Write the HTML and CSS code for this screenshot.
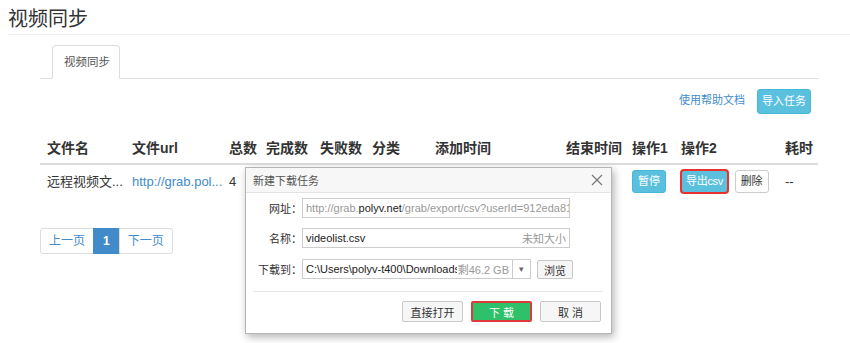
FILE: index.html
```html
<!DOCTYPE html>
<html lang="zh-CN">

<head>
  <meta charset="UTF-8">
  <title>视频同步</title>
  <link rel="stylesheet" href="styles.css">
</head>

<body>
  <h3 class="page-title">视频同步</h3>

  <div class="content">
    <ul class="tabs">
      <li class="tab active">视频同步</li>
    </ul>

    <div class="toolbar">
      <a class="help-link">使用帮助文档</a>
      <button class="btn btn-info">导入任务</button>
    </div>

    <table class="task-table">
      <colgroup>
        <col style="width: 85px">
        <col style="width: 97px">
        <col style="width: 37px">
        <col style="width: 54px">
        <col style="width: 52px">
        <col style="width: 63px">
        <col style="width: 131px">
        <col style="width: 66px">
        <col style="width: 49px">
        <col style="width: 104px">
        <col style="width: 40px">
      </colgroup>
      <thead>
        <tr>
          <th>文件名</th>
          <th>文件url</th>
          <th>总数</th>
          <th>完成数</th>
          <th>失败数</th>
          <th>分类</th>
          <th>添加时间</th>
          <th>结束时间</th>
          <th>操作1</th>
          <th>操作2</th>
          <th>耗时</th>
        </tr>
      </thead>
      <tbody>
        <tr>
          <td>远程视频文...</td>
          <td><a class="url">http://grab.pol...</a></td>
          <td>4</td>
          <td></td>
          <td></td>
          <td></td>
          <td></td>
          <td></td>
          <td><button class="btn btn-info btn-sm">暂停</button></td>
          <td>
            <button class="btn btn-info btn-sm marked">导出csv</button>
            <button class="btn btn-default btn-sm">删除</button>
          </td>
          <td>--</td>
        </tr>
      </tbody>
    </table>

    <ul class="pager">
      <li>上一页</li>
      <li class="active">1</li>
      <li>下一页</li>
    </ul>
  </div>

  <!-- 浏览器的下载对话框 -->
  <div class="download-dialog">
    <div class="dialog-head">
      <span>新建下载任务</span>
      <svg class="close" width="12" height="12" viewBox="0 0 12 12">
        <path d="M1 1L11 11M11 1L1 11" stroke="#777" stroke-width="1.2" fill="none"/>
      </svg>
    </div>
    <div class="dialog-body">
      <div class="field">
        <label>网址：</label>
        <div class="input"><span class="dim">http://grab.</span>polyv.net<span class="dim">/grab/export/csv?userId=912eda818a</span></div>
      </div>
      <div class="field">
        <label>名称：</label>
        <div class="input"><span class="grow">videolist.csv</span><span class="dim">未知大小</span></div>
      </div>
      <div class="field">
        <label>下载到：</label>
        <div class="input path-input">
          <span class="grow path">C:\Users\polyv-t400\Downloads\12</span>
          <span class="dim free">剩46.2 GB</span>
          <span class="drop">▾</span>
        </div>
        <button class="dlg-btn browse">浏览</button>
      </div>
    </div>
    <div class="dialog-foot">
      <button class="dlg-btn">直接打开</button>
      <button class="dlg-btn primary">下 载</button>
      <button class="dlg-btn">取 消</button>
    </div>
  </div>
</body>

</html>
```

FILE: styles.css
```css
body {
  margin: 0;
  padding: 8px 0 0;
  font-family: "Liberation Sans", "Noto Sans CJK SC", sans-serif;
  font-size: 13px;
  color: #333;
  background: #fff;
}

.page-title {
  margin: 0 0 0 8px;
  padding-bottom: 4px;
  font-size: 20px;
  font-weight: normal;
  line-height: 22px;
  border-bottom: 1px solid #eee;
}

.content {
  width: 778px;
  margin-left: 40px;
}

/* 标签页 */
.tabs {
  display: flex;
  margin: 10px 0 0;
  padding: 0 0 0 12px;
  list-style: none;
  border-bottom: 1px solid #ddd;
}

.tab {
  height: 32px;
  padding: 0 9px 0 11px;
  margin-bottom: -1px;
  font-size: 11.5px;
  line-height: 32px;
  color: #555;
  background: #fff;
  border: 1px solid #ddd;
  border-bottom-color: #fff;
  border-radius: 4px 4px 0 0;
}

.toolbar {
  display: flex;
  justify-content: flex-end;
  align-items: center;
  gap: 12px;
  margin-top: 10px;
  padding-right: 7px;
}

.help-link {
  color: #428bca;
  font-size: 11px;
  margin-top: -6px;
}

.btn {
  font-family: inherit;
  font-size: 11px;
  line-height: 15px;
  padding: 3px 6px;
  border-radius: 3px;
  border: 1px solid transparent;
  cursor: pointer;
}

.btn-info {
  color: #fff;
  background-color: #5bc0de;
  border-color: #46b8da;
}

.btn-default {
  color: #333;
  background: #fff;
  border-color: #ccc;
}

.toolbar .btn {
  padding: 4px 4px;
}

.btn-sm {
  padding: 3px 5px;
  font-size: 11px;
}

.marked {
  padding: 3px 4px;
  letter-spacing: -0.3px;
  outline: 2px solid #e8322e;
  outline-offset: -1px;
}

/* 任务表格 */
.task-table {
  width: 778px;
  margin-top: 18px;
  table-layout: fixed;
  border-collapse: collapse;
}

.task-table th {
  padding: 7px 0 6px 7px;
  text-align: left;
  font-size: 14px;
  font-weight: bold;
  line-height: 18px;
  border-bottom: 2px solid #ddd;
}

.task-table td {
  padding: 5px 0 5px 7px;
  font-size: 13px;
  line-height: 22px;
  white-space: nowrap;
  overflow: visible;
}

.task-table td .btn + .btn {
  margin-left: 3px;
}

.url {
  color: #428bca;
}

/* 分页 */
.pager {
  display: flex;
  margin: 30px 0 0 1px;
  padding: 0;
  list-style: none;
}

.pager li {
  padding: 0 8px;
  height: 24px;
  line-height: 24px;
  font-size: 12px;
  color: #428bca;
  border: 1px solid #ddd;
  margin-left: -1px;
}

.pager li:first-child {
  border-radius: 3px 0 0 3px;
}

.pager li:last-child {
  border-radius: 0 3px 3px 0;
}

.pager li.active {
  color: #fff;
  background: #428bca;
  border-color: #428bca;
  font-weight: bold;
  padding: 0 9px;
}

/* 下载对话框 */
.download-dialog {
  position: absolute;
  left: 245px;
  top: 167px;
  width: 365px;
  height: 165px;
  background: #fff;
  border: 1px solid #b5b5b5;
  box-shadow: 2px 3px 8px rgba(0, 0, 0, 0.3);
  font-family: "Liberation Sans", "Noto Sans CJK SC", sans-serif;
  font-size: 11px;
  color: #333;
}

.dialog-head {
  display: flex;
  justify-content: space-between;
  align-items: center;
  height: 24px;
  padding: 0 8px 0 7px;
  background: #f7f7f7;
  border-bottom: 1px solid #e3e3e3;
  color: #555;
}

.dialog-body {
  padding: 5px 0 0;
}

.field {
  display: flex;
  align-items: center;
  height: 20px;
  margin-bottom: 10px;
}

.field label {
  width: 56px;
  text-align: right;
  color: #333;
}

.field:last-child {
  height: 22px;
  margin-bottom: 0;
}

.input {
  display: flex;
  align-items: center;
  width: 260px;
  height: 18px;
  padding: 0 3px;
  border: 1px solid #ccc;
  white-space: nowrap;
  overflow: hidden;
  color: #222;
}

.dim {
  color: #999;
}

.grow {
  flex: 1;
  min-width: 0;
}

.path-input {
  width: 224px;
  padding-right: 0;
}

.path {
  overflow: hidden;
}

.free {
  padding: 0 3px 0 1px;
}

.drop {
  width: 17px;
  height: 18px;
  line-height: 18px;
  text-align: center;
  font-size: 9px;
  color: #666;
  border-left: 1px solid #ccc;
}

.dlg-btn {
  font-family: inherit;
  font-size: 11px;
  height: 21px;
  width: 61px;
  color: #333;
  background: #f6f6f6;
  border: 1px solid #c8c8c8;
  border-radius: 2px;
}

.browse {
  width: 36px;
  height: 19px;
  margin-left: 6px;
}

.dialog-foot {
  display: flex;
  justify-content: flex-end;
  gap: 8px;
  margin: 11px 8px 0 7px;
  padding-top: 9px;
  padding-right: 2px;
  border-top: 1px solid #e6e6e6;
}

.dlg-btn.primary {
  color: #fff;
  background: #2fc06a;
  border: 2px solid #e0393a;
}
```
